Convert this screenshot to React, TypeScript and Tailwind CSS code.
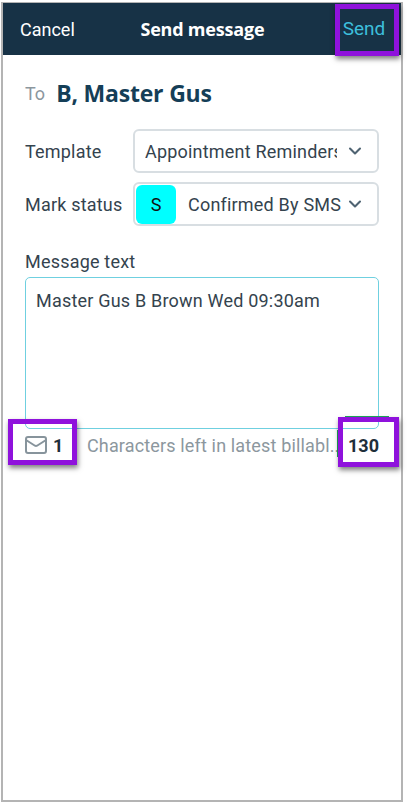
import React from 'react'
import { ChevronDown, Mail } from 'lucide-react'

const App: React.FC = () => {
  return (
    <div className="w-[407px] h-[804px] bg-white font-['Roboto',sans-serif] overflow-hidden">
      <div className="relative w-[402px] h-[800px] ml-[1px] mt-[2px] border-2 border-t-[1px] border-[#b4b4b4] bg-white">
        {/* Header */}
        <div className="flex items-center justify-between h-[52px] bg-[#173246] pl-[17px] pr-[6px]">
          <span className="text-[18px] text-white">Cancel</span>
          <span className="text-[18px] font-bold text-white font-['Open_Sans',sans-serif] tracking-[-0.2px] ml-[-3px]">Send message</span>
          <span className="w-[62px] text-center text-[19px] text-[#3dbfdc]">Send</span>
        </div>

        <div className="px-[22px]">
          {/* To */}
          <div className="flex items-center gap-[11px] mt-[20px] h-[36px]">
            <span className="text-[18px] text-[#8c979e]">To</span>
            <span className="text-[23px] font-bold text-[#153e57] font-['Open_Sans',sans-serif] tracking-[-0.2px]">B, Master Gus</span>
          </div>

          {/* Template */}
          <div className="flex items-center mt-[18px]">
            <span className="w-[108px] text-[18px] tracking-[0.2px] text-[#34434e]">Template</span>
            <div className="flex items-center w-[246px] h-[44px] pl-[10px] pr-[12px] border-2 border-[#d8dee2] rounded-[6px]">
              <span className="w-[192px] overflow-hidden whitespace-nowrap text-[18px] tracking-[0.2px] text-[#34434e]">Appointment Reminders</span>
              <ChevronDown className="w-[20px] h-[20px] ml-auto text-[#4f6372] shrink-0" strokeWidth={2.5} />
            </div>
          </div>

          {/* Mark status */}
          <div className="flex items-center mt-[9px]">
            <span className="w-[108px] text-[18px] tracking-[0.2px] text-[#34434e]">Mark status</span>
            <div className="flex items-center w-[246px] h-[44px] pl-[1px] pr-[12px] border-2 border-[#d8dee2] rounded-[6px]">
              <div className="flex items-center justify-center w-[40px] h-[39px] rounded-[6px] bg-[#00ffff] text-[18px] text-[#111]">S</div>
              <span className="flex-1 ml-[12px] whitespace-nowrap text-[18px] tracking-[0.2px] text-[#34434e]">Confirmed By SMS</span>
              <ChevronDown className="w-[20px] h-[20px] text-[#4f6372] shrink-0" strokeWidth={2.5} />
            </div>
          </div>

          {/* Message */}
          <div className="mt-[22px] text-[18px] tracking-[0.2px] text-[#34434e]">Message text</div>
          <div className="mt-[2px] w-[354px] h-[152px] px-[10px] py-[9px] border border-[#6fd0e0] rounded-[5px] text-[18px] tracking-[0.2px] text-[#34434e]">
            Master Gus B Brown Wed 09:30am
          </div>
        </div>

        {/* Counter row */}
        <div className="flex items-center mt-[1px] pl-[21px] pr-[22px] h-[30px]">
          <Mail className="w-[24px] h-[24px] text-[#87949c] shrink-0" strokeWidth={2} />
          <span className="ml-[5px] w-[34px] text-[18px] font-bold text-[#1f2f3a]">1</span>
          <span className="w-[252px] whitespace-nowrap text-[18px] tracking-[0.15px] text-[#8c979e]">Characters left in latest billabl..</span>
          <span className="ml-auto text-[18px] font-bold text-[#1f2f3a]">130</span>
        </div>

        {/* Highlight boxes */}
        <div className="absolute left-[342px] top-[413px] w-[44px] h-[1px] bg-[#1fa85a]" />
        <div className="absolute left-[334px] top-[427px] w-[1px] h-[27px] bg-[#1fa85a]" />
        <div className="absolute left-[332px] top-[1px] w-[64px] h-[52px] border-[5px] border-[#8f12dc] shadow-[1px_3px_5px_rgba(0,0,0,0.5)]" />
        <div className="absolute left-[5px] top-[416px] w-[69px] h-[46px] border-[5px] border-[#8f12dc] shadow-[1px_3px_5px_rgba(0,0,0,0.5)]" />
        <div className="absolute left-[335px] top-[414px] w-[61px] h-[50px] border-[5px] border-[#8f12dc] shadow-[1px_3px_5px_rgba(0,0,0,0.5)]" />
      </div>
    </div>
  )
}

export default App
